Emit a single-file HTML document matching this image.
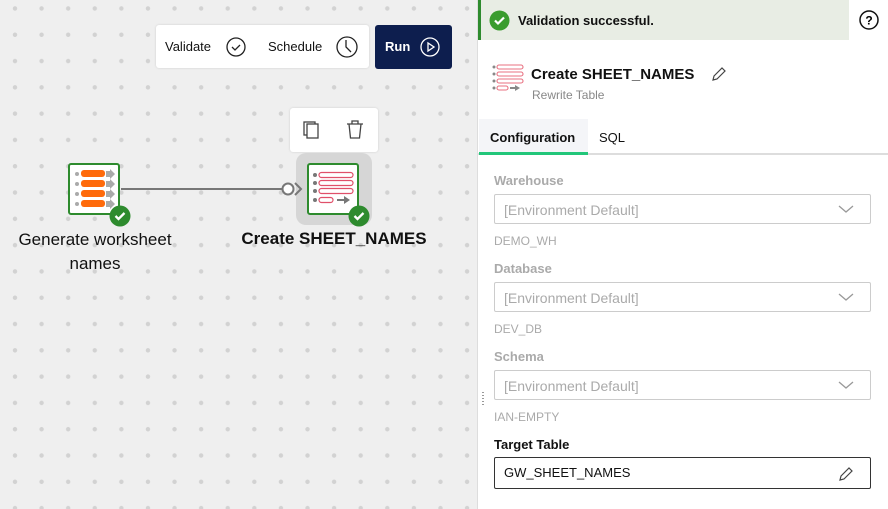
<!DOCTYPE html>
<html><head><style>
body{margin:0;width:888px;height:509px;overflow:hidden;font-family:"Liberation Sans",sans-serif;position:relative;background:#fff}
.canvas{position:absolute;left:0;top:0;width:477px;height:509px;background-color:#efefef;background-image:radial-gradient(circle,#d2d2d2 2px,transparent 2.4px);background-size:26.6px 26.3px;background-position:1.7px -4.7px}
.abs{position:absolute}
.panel{position:absolute;left:477px;top:0;width:411px;height:509px;background:#fff;border-left:1px solid #ddd}
.lbl{position:absolute;left:16px;font-size:13px;font-weight:bold;color:#aaa}
.sel{position:absolute;left:16px;width:377px;height:30px;border:1px solid #ccc;border-radius:2px;font-size:14px;color:#aaa;line-height:30px;box-sizing:border-box;padding-left:9px;background:#fff}
.sub{position:absolute;left:16px;font-size:12px;color:#aaa}
.chev{position:absolute;right:16px;top:9px}
</style></head><body>
<div class="canvas"></div>
<div class="abs" style="left:156px;top:25px;width:213px;height:43px;background:#fff;border-radius:3px;box-shadow:0 0 2px #ccc"></div>
<div class="abs" style="left:165px;top:39px;font-size:13px;color:#111">Validate</div>
<svg class="abs" style="left:225px;top:36px" width="22" height="22"><circle cx="11" cy="11" r="9" fill="none" stroke="#222" stroke-width="1.3"/><path d="M7 11l3 3 5-5" fill="none" stroke="#222" stroke-width="1.3"/></svg>
<div class="abs" style="left:268px;top:39px;font-size:13px;color:#111">Schedule</div>
<svg class="abs" style="left:335px;top:35px" width="24" height="24"><circle cx="12" cy="12" r="10" fill="none" stroke="#222" stroke-width="1.3"/><path d="M11 5v7l5 5" fill="none" stroke="#222" stroke-width="1.3"/></svg>
<div class="abs" style="left:375px;top:25px;width:77px;height:44px;background:#0d1e4e;border-radius:3px"></div>
<div class="abs" style="left:385px;top:39px;font-size:13px;color:#fff;font-weight:bold">Run</div>
<svg class="abs" style="left:419px;top:36px" width="22" height="22"><circle cx="11" cy="11" r="9" fill="none" stroke="#fff" stroke-width="1.3"/><path d="M9 7v8l6-4z" fill="none" stroke="#fff" stroke-width="1.3"/></svg>

<div class="abs" style="left:290px;top:108px;width:88px;height:44px;background:#fff;border-radius:3px;box-shadow:0 0 2px #ccc"></div>
<svg class="abs" style="left:302px;top:120px" width="20" height="20"><rect x="2" y="2" width="11" height="13" fill="none" stroke="#444" stroke-width="1.3"/><rect x="5" y="4" width="11" height="14" fill="#fff" stroke="#444" stroke-width="1.3"/></svg>
<svg class="abs" style="left:345px;top:119px" width="20" height="22"><path d="M2 5h16M7 5V2h6v3M4 5l1.5 14h9L16 5" fill="none" stroke="#444" stroke-width="1.3"/></svg>

<div class="abs" style="left:296px;top:153px;width:76px;height:72px;background:#d6d6d6;border-radius:10px"></div>
<!-- connector -->
<div class="abs" style="left:121px;top:188px;width:162px;height:2px;background:#777"></div>
<svg class="abs" style="left:280px;top:180px" width="26" height="20"><circle cx="8" cy="9" r="5.5" fill="#fff" stroke="#777" stroke-width="2"/><path d="M15 3l6 6-6 6" fill="none" stroke="#777" stroke-width="2"/></svg>

<!-- node 1 -->
<div class="abs" style="left:68px;top:163px;width:52px;height:52px;background:#fff;border:2px solid #2e8b2e;border-radius:3px;box-sizing:border-box"></div>
<svg class="abs" style="left:72px;top:167px" width="46" height="46">
<g fill="#aaa"><circle cx="5" cy="7" r="2"/><circle cx="5" cy="17" r="2"/><circle cx="5" cy="27" r="2"/><circle cx="5" cy="37" r="2"/></g>
<g fill="#ff6a0a"><rect x="9" y="3" width="24" height="7" rx="3"/><rect x="9" y="13" width="24" height="7" rx="3"/><rect x="9" y="23" width="24" height="7" rx="3"/><rect x="9" y="33" width="24" height="7" rx="3"/></g>
<g fill="#aaa"><path d="M34 4h4V2l5 5-5 5v-2h-4z"/><path d="M34 14h4v-2l5 5-5 5v-2h-4z"/><path d="M34 24h4v-2l5 5-5 5v-2h-4z"/><path d="M34 34h4v-2l5 5-5 5v-2h-4z"/></g></svg>
<svg class="abs" style="left:109px;top:205px" width="22" height="22"><circle cx="11" cy="11" r="10.5" fill="#2e8b2e"/><path d="M6.5 11l3 3 6-6" fill="none" stroke="#fff" stroke-width="2.3"/></svg>
<div class="abs" style="left:0;top:228px;width:190px;text-align:center;font-size:17px;color:#111;line-height:24px">Generate worksheet<br>names</div>

<!-- node 2 -->
<div class="abs" style="left:307px;top:163px;width:52px;height:52px;background:#fff;border:2px solid #2e8b2e;border-radius:3px;box-sizing:border-box"></div>
<svg class="abs" style="left:311px;top:167px" width="46" height="46">
<g fill="#777"><circle cx="4" cy="8" r="2"/><circle cx="4" cy="16" r="2"/><circle cx="4" cy="24" r="2"/><circle cx="4" cy="33" r="2"/></g>
<g fill="none" stroke="#e0506a" stroke-width="1.2"><rect x="8" y="5.5" width="34" height="5" rx="2.5"/><rect x="8" y="13.5" width="34" height="5" rx="2.5"/><rect x="8" y="21.5" width="34" height="5" rx="2.5"/><rect x="8" y="30.5" width="14" height="5" rx="2.5"/></g>
<path d="M26 32h7v-3l6 4-6 4v-3h-7z" fill="#777"/></svg>
<svg class="abs" style="left:348px;top:205px" width="22" height="22"><circle cx="11" cy="11" r="10.5" fill="#2e8b2e"/><path d="M6.5 11l3 3 6-6" fill="none" stroke="#fff" stroke-width="2.3"/></svg>
<div class="abs" style="left:234px;top:229px;width:200px;text-align:center;font-size:17px;color:#111;font-weight:bold;line-height:20px">Create SHEET_NAMES</div>

<!-- panel -->
<div class="panel">
<div class="abs" style="left:0;top:0;width:371px;height:40px;background:#e8ede4;border-left:3px solid #2e8b2e;box-sizing:border-box"></div>
<svg class="abs" style="left:11px;top:10px" width="21" height="21"><circle cx="10.5" cy="10.5" r="10" fill="#3a9c2e"/><path d="M6 10.5l3 3 6-6" fill="none" stroke="#fff" stroke-width="2.2"/></svg>
<div class="abs" style="left:40px;top:13px;font-size:13px;font-weight:bold;color:#111">Validation successful.</div>
<svg class="abs" style="left:381px;top:10px" width="20" height="20"><circle cx="10" cy="10" r="9" fill="none" stroke="#111" stroke-width="1.5"/><text x="10" y="14.5" font-size="12" font-weight="bold" text-anchor="middle" font-family="Liberation Sans">?</text></svg>

<svg class="abs" style="left:14px;top:64px" width="34" height="30">
<g fill="#888"><circle cx="2" cy="3" r="1.5"/><circle cx="2" cy="10" r="1.5"/><circle cx="2" cy="17" r="1.5"/><circle cx="2" cy="24" r="1.5"/></g>
<g fill="none" stroke="#e87080" stroke-width="1.1"><rect x="5" y="1" width="26" height="4" rx="2"/><rect x="5" y="8" width="26" height="4" rx="2"/><rect x="5" y="15" width="26" height="4" rx="2"/><rect x="5" y="22" width="11" height="4" rx="2"/></g>
<path d="M18 23h5v-2l5 3-5 3v-2h-5z" fill="#888"/></svg>
<div class="abs" style="left:53px;top:66px;font-size:15px;font-weight:bold;color:#111">Create SHEET_NAMES</div>
<svg class="abs" style="left:233px;top:66px" width="16" height="16"><path d="M2 14l1-4 8-8 3 3-8 8z" fill="none" stroke="#444" stroke-width="1.2"/></svg>
<div class="abs" style="left:54px;top:88px;font-size:12px;color:#888">Rewrite Table</div>

<div class="abs" style="left:1px;top:119px;width:109px;height:34px;background:#f4f5f8"></div>
<div class="abs" style="left:0;top:153px;width:411px;height:2px;background:#ddd"></div>
<div class="abs" style="left:1px;top:152px;width:109px;height:3px;background:#22c67a"></div>
<div class="abs" style="left:12px;top:130px;font-size:13px;font-weight:bold;color:#111">Configuration</div>
<div class="abs" style="left:121px;top:130px;font-size:13px;color:#111">SQL</div>

<div class="lbl" style="top:173px">Warehouse</div>
<div class="sel" style="top:194px">[Environment Default]<svg class="chev" width="16" height="10"><path d="M1 2l7 6 7-6" fill="none" stroke="#999" stroke-width="1.3"/></svg></div>
<div class="sub" style="top:234px">DEMO_WH</div>
<div class="lbl" style="top:261px">Database</div>
<div class="sel" style="top:282px">[Environment Default]<svg class="chev" width="16" height="10"><path d="M1 2l7 6 7-6" fill="none" stroke="#999" stroke-width="1.3"/></svg></div>
<div class="sub" style="top:322px">DEV_DB</div>
<div class="lbl" style="top:349px">Schema</div>
<div class="sel" style="top:370px">[Environment Default]<svg class="chev" width="16" height="10"><path d="M1 2l7 6 7-6" fill="none" stroke="#999" stroke-width="1.3"/></svg></div>
<div class="sub" style="top:410px">IAN-EMPTY</div>
<div class="lbl" style="top:437px;color:#111">Target Table</div>
<div class="sel" style="top:457px;height:32px;border-color:#333;color:#111;font-size:13px;line-height:30px">GW_SHEET_NAMES<svg class="abs" style="right:16px;top:8px" width="16" height="16"><path d="M2 14l1-4 8-8 3 3-8 8z" fill="none" stroke="#444" stroke-width="1.2"/></svg></div>
</div>
<div class="abs" style="left:482px;top:392px;width:2px;height:14px;background:repeating-linear-gradient(#999 0 1px,transparent 1px 3px)"></div>
</body></html>
